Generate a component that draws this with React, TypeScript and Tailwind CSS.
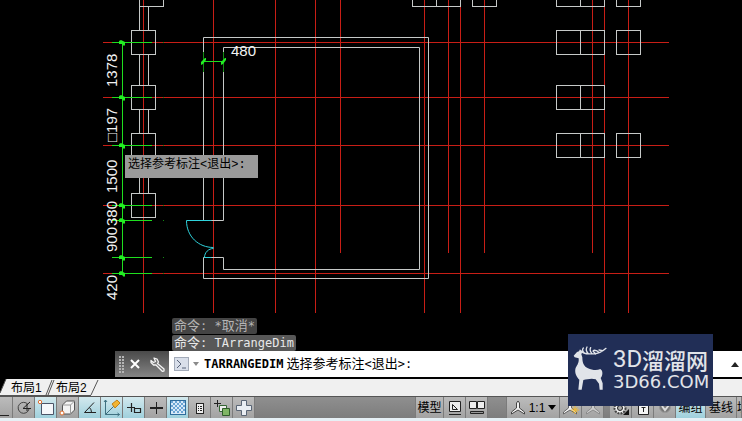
import React from 'react';

const MONO = "font-['DejaVu_Sans_Mono','Noto_Sans_CJK_SC',monospace]";

type Line = [number, number, number, number];

// Axis grid of the plan: x / y positions and where each one ends
const AXIS_X = [
    [143, 313], [213, 313], [275, 313], [315, 313], [340, 253], [424, 313],
    [448, 253], [460, 313], [484, 253], [592, 253], [604, 313], [628, 313],
];
const AXIS_Y = [42, 97, 145, 205, 273];
const DIM_Y = [42, 97, 145, 205, 220, 257, 273];

// Columns, all 24 x 24
const COLUMNS = [
    [139, -18], [412, -18], [436, -18], [472, -18], [556, -18], [580, -18], [616, -18],
    [131, 30], [131, 85], [131, 133], [131, 193],
    [556, 30], [580, 30], [616, 30],
    [556, 85], [580, 85],
    [556, 133], [580, 133], [616, 133],
];

const WALLS: Line[] = [
    [139, 6, 139, 30], [148, 6, 148, 30],
    [139, 54, 139, 85], [148, 54, 148, 85],
    [139, 109, 139, 133], [148, 109, 148, 133],
    [139, 157, 139, 193], [148, 157, 148, 193],
];

const DIM_TEXT = [
    { x: 117, y: 87, text: '1378' },
    { x: 117, y: 142, text: '□197' },
    { x: 117, y: 193, text: '1500' },
    { x: 117, y: 226, text: '380' },
    { x: 117, y: 252, text: '900' },
    { x: 117, y: 300, text: '420' },
];

const FloorPlan = () => (
    <svg width="742" height="320" className="block" role="img" aria-label="Floor plan">
        <g fill="#c81e16">
            {AXIS_X.map(([x, end]) => (
                <rect key={x} x={x} y="0" width="1" height={end} />
            ))}
            {AXIS_Y.map((y) => (
                <rect key={y} x="103" y={y} width="566" height="1" />
            ))}
        </g>
        <g transform="translate(0.5 0.5)" fill="none">
            <g stroke="#c6c9c8">
                {COLUMNS.map(([x, y]) => (
                    <rect key={`${x}-${y}`} x={x} y={y} width="24" height="24" />
                ))}
                {WALLS.map(([x1, y1, x2, y2]) => (
                    <path key={`${x1}-${y1}`} d={`M${x1} ${y1}L${x2} ${y2}`} />
                ))}
                <path d="M203 220V37H428V278H203V257H223V269H419V47H223V220H203" />
            </g>
            {/* Door */}
            <g stroke="#2fd3dc">
                <path d="M186 220H211M204 257H211" />
                <path d="M186 220C186 236 198 247 213 247" />
                <path d="M204 257C204 252 208 248 213 248" />
            </g>
        </g>
        {/* Dimension lines */}
        <g fill="#1fdf1f">
            <rect x="122" y="42" width="1" height="232" />
            {DIM_Y.map((y) => (
                <rect key={y} x="112" y={y} width="40" height="1" />
            ))}
            <rect x="203" y="61" width="21" height="1" />
        </g>
        <g fill="#128a12">
            <rect x="203" y="52" width="1" height="20" />
            <rect x="223" y="52" width="1" height="20" />
            {DIM_Y.map((y) => (
                <rect key={y} x="163" y={y} width="1" height="1" />
            ))}
        </g>
        <g fill="#22ee22">
            {DIM_Y.map((y) => (
                <path key={y} d={`M119 ${y - 1}l2 -1l4 2v3l-1 1l-2 -2h-3z`} />
            ))}
            <path d="M201 62l4 -4h1v2l-3 4l-2 1zM221 62l4 -4h1v2l-3 4l-2 1z" />
        </g>
        <g fill="#f2f2f2" className="font-['Liberation_Sans','DejaVu_Sans',sans-serif] text-[15px]">
            <text x="231" y="56">480</text>
            {DIM_TEXT.map(({ x, y, text }) => (
                <text key={text} transform={`translate(${x} ${y}) rotate(-90)`}>{text}</text>
            ))}
        </g>
    </svg>
);

const Deer = () => (
    <svg viewBox="0 0 225 180" width="75" height="60" className="absolute top-0 left-0" aria-hidden="true">
        <path
            fill="#e1e4e9"
            d="M17 65L27 54L33 52L36 46L43 54L40 61L43 70C43 88 48 98 60 103C72 108 86 111 97 105L102 110C105 119 102 127 98 132L104 148V167H95L93 149L83 136C70 132 58 136 46 138L41 167H31L34 137C26 130 20 118 22 106C24 96 34 90 32 73L20 70Z"
        />
        <path
            fill="none"
            stroke="#e1e4e9"
            strokeWidth="4"
            strokeLinecap="round"
            d="M39 51C46 61 60 60 72 59C90 62 104 52 114 43M50 58C43 52 42 46 46 42M61 59C54 52 54 44 57 39M72 59C66 52 65 46 68 41M94 56C88 50 82 48 77 49M83 60L75 51M104 50L93 48"
        />
    </svg>
);

const Logo = () => (
    <div className="absolute right-[29px] bottom-[15px] h-[72px] w-[145px] bg-[#212e56] text-[#e1e4e9]">
        <Deer />
        <div className="flex flex-col pt-[12px] pl-[45px] whitespace-nowrap">
            <div className="flex h-[26px] items-center leading-[26px]">
                <span className="w-[29px] font-['Roboto',sans-serif] text-[24px]">3D</span>
                <span className="font-['Noto_Sans_CJK_SC',sans-serif] text-[22px] font-medium">溜溜网</span>
            </div>
            <span className="font-['DejaVu_Sans',sans-serif] text-[18px] leading-[20px]">3D66.COM</span>
        </div>
    </div>
);

const CommandLine = () => (
    <div className="absolute right-0 bottom-[2px] left-[115px] flex h-[26px] bg-white">
        <div className="flex w-[54px] shrink-0 items-center bg-linear-to-b from-[#4a4a4a] to-[#858585] pl-1">
            <svg width="5" height="17" fill="#b5b5b5" aria-hidden="true">
                {[0, 3, 6, 9, 12, 15].map((y) => (
                    <path key={y} d={`M0 ${y}h2v2h-2zM3 ${y}h2v2h-2z`} />
                ))}
            </svg>
            <button aria-label="Close" className="ml-[6px] p-0">
                <svg width="10" height="10" stroke="#fff" strokeWidth="2">
                    <path d="M1 1l8 8M9 1l-8 8" />
                </svg>
            </button>
            <button aria-label="Customize" className="ml-[10px]">
                <svg width="15" height="15" viewBox="0 0 15 15">
                    <path
                        d="M4 1L7 2L8.500 5L7.500 6.500L14 12V14L12.500 14.500L6 8L3.500 8L1 5.500L1 3.500L3.500 5.500L5.500 4.500Z"
                        fill="#777"
                        stroke="#f4f4f4"
                        strokeWidth="1.3"
                        strokeLinejoin="round"
                    />
                </svg>
            </button>
        </div>
        <button aria-label="Recent commands" className="ml-[5px] flex shrink-0 items-center gap-1">
            <svg width="15" height="14">
                <rect x=".5" y=".5" width="14" height="13" fill="#d9dfea" stroke="#a3abb9" />
                <path d="M3 3l4 4l-4 4M8 11h4" fill="none" stroke="#59647a" />
            </svg>
            <svg width="6" height="4">
                <path d="M0 0h6l-3 4z" fill="#8a8a8a" />
            </svg>
        </button>
        <label htmlFor="command" className={`${MONO} ml-[5px] flex shrink-0 items-center gap-[3px] text-[12px] text-black`}>
            <span className="font-bold">TARRANGEDIM</span>
            <span>
                <span className="text-[13px]">选择参考标注</span>&lt;<span className="text-[13px]">退出</span>&gt;:
            </span>
        </label>
        <input id="command" className="min-w-0 flex-1 px-1 text-[12px] outline-none" />
        <button aria-label="Show history" className="pr-[3px]">
            <svg width="8" height="5">
                <path d="M0 5h8l-4 -5z" fill="#222" />
            </svg>
        </button>
    </div>
);

interface ToolProps {
    label: string;
    active?: boolean;
    className?: string;
    children: React.ReactNode;
}

const Tool = ({ label, active, className = 'w-[22px]', children }: ToolProps) => (
    <button
        aria-label={label}
        className={`flex h-full shrink-0 items-center justify-center border-r border-[#7b7b7b] ${className} ${
            active ? 'bg-linear-to-b from-[#d3e9ee] to-[#9fd0dc]' : 'bg-linear-to-b from-[#bcbcbc] to-[#a2a2a2]'
        }`}
    >
        {children}
    </button>
);

const Icon = ({ children, width = 20 }: { children: React.ReactNode; width?: number }) => (
    <svg width={width} height="20" viewBox={`0 0 ${width} 20`} fill="none" stroke="#222" aria-hidden="true">
        {children}
    </svg>
);

const StatusBar = () => (
    <div className="flex h-[22px] shrink-0 overflow-hidden border-t border-[#555] bg-linear-to-b from-[#8f8f8f] to-[#7d7d7d] font-['Liberation_Sans','Noto_Sans_CJK_SC',sans-serif] text-[12px] text-black">
        <Tool label="Grid" className="w-[13px]">
            <Icon width={12}><path d="M0 17.500h9" /></Icon>
        </Tool>
        <Tool label="Polar tracking">
            <Icon>
                <path d="M14 6.500A5.500 5.500 0 1 0 15 11" stroke="#444" />
                <path d="M17 10.500H9L16 4M13 6v7" />
            </Icon>
        </Tool>
        <Tool label="Object snap" active>
            <Icon>
                <path d="M5.500 5.500h12v11h-12z" fill="#f6f8fb" stroke="#4b5568" />
                <circle cx="4" cy="4" r="1.700" fill="#fff" stroke="#e07030" />
            </Icon>
        </Tool>
        <Tool label="3D object snap">
            <Icon>
                <path d="M4.500 7l4 -4h8v9l-4 4h-8z" fill="#f3f3f3" stroke="#555" />
                <path d="M4.500 7h8v9M12.500 7l4 -4" stroke="#999" />
                <circle cx="4" cy="15" r="2" fill="#fff" stroke="#e07030" />
            </Icon>
        </Tool>
        <Tool label="Object snap tracking" active>
            <Icon><path d="M14 4.500L4.500 14.500H16M9.500 9.500q2 2 2 5" /></Icon>
        </Tool>
        <Tool label="Dynamic UCS" active>
            <Icon>
                <path d="M3.500 2v14.500h14M3.500 16.500L13 7M2 4l1.500 -2l1.500 2M15.500 15l2 1.500l-2 1.500" stroke="#3f7080" />
                <path d="M10 6l5 -4l3 3l-5 5z" fill="#f2b432" stroke="#c08018" />
            </Icon>
        </Tool>
        <Tool label="Dynamic input" active>
            <Icon><path d="M3 9.500h8M7.500 5v9M10.500 10.500h6v4h-6z" strokeWidth="1.200" /></Icon>
        </Tool>
        <Tool label="Lineweight">
            <Icon>
                <path d="M4 10h13" strokeWidth="2" />
                <path d="M10.500 4v12" />
            </Icon>
        </Tool>
        <Tool label="Transparency" active>
            <Icon>
                <rect x="2.500" y="2.500" width="15" height="14" fill="#d8e9f8" stroke="#2e6c9c" />
                <path d="M3 4h14M3 8h14M3 12h14" stroke="#6aa5d4" strokeWidth="2" strokeDasharray="2 2" />
                <path d="M5 6h12M5 10h12M5 14h12" stroke="#6aa5d4" strokeWidth="2" strokeDasharray="2 2" />
            </Icon>
        </Tool>
        <Tool label="Quick properties">
            <Icon>
                <rect x="6.500" y="5.500" width="7" height="10" fill="#eee" />
                <path d="M8 8.500h1M10 8.500h2M8 10.500h1M10 10.500h2M8 12.500h1M10 12.500h2" />
            </Icon>
        </Tool>
        <Tool label="Selection cycling">
            <Icon>
                <path d="M2 5.500h7M5.500 2v7" />
                <path d="M7.500 7.500h7v6h-7z" fill="#eee" stroke="#356635" />
                <path d="M10.500 10.500h7v7h-7z" fill="#7fb565" stroke="#2f5c2b" />
            </Icon>
        </Tool>
        <Tool label="Annotation monitor">
            <Icon>
                <path d="M7.500 2.500h5v5h5v5h-5v5h-5v-5h-5v-5h5z" fill="#e9eef3" stroke="#596575" />
            </Icon>
        </Tool>

        <div className="flex-1" />

        <Tool label="Model" className="w-[29px] border-l"><span>模型</span></Tool>
        <Tool label="Layout view">
            <Icon>
                <path d="M4.500 3.500h11v10h-11z" fill="#eee" />
                <path d="M7.500 6.500v5h5zM4 16.500h12" />
            </Icon>
        </Tool>
        <Tool label="Quick view">
            <Icon>
                <path d="M2.500 3.500h7v7h-7zM10.500 3.500h7v7h-7z" fill="#eee" />
                <path d="M3.500 13.500h13v2h-13z" fill="#999" />
            </Icon>
        </Tool>
        <div className="w-[18px] shrink-0" />
        <Tool label="Annotation scale" className="w-[54px] gap-[3px] border-l">
            <Icon width={16}>
                <path d="M8 3l1.500 2v5l5 4v2l-6.500 -4l-6.500 4v-2l5 -4v-5z" fill="#f2f2f2" stroke="#444" />
            </Icon>
            <span>1:1</span>
            <svg width="8" height="5"><path d="M0 0h8l-4 5z" /></svg>
        </Tool>
        <Tool label="Annotation visibility">
            <Icon>
                <path d="M9 3l1.500 2v5l5 4v2l-6.500 -4l-6.500 4v-2l5 -4v-5z" fill="#f2f2f2" stroke="#666" />
                <path d="M14 8v8M10 12h8M11.500 9.500l5 5M16.500 9.500l-5 5" stroke="#f0b830" />
            </Icon>
        </Tool>
        <Tool label="Auto scale">
            <Icon>
                <path d="M10 5l1.500 2v3l5 4v2l-6.500 -4l-6.500 4v-2l5 -4v-3z" fill="#ccc" stroke="#8a8a8a" />
            </Icon>
        </Tool>
        <div className="w-[6px] shrink-0" />
        <Tool label="Workspace">
            <Icon>
                <circle cx="9" cy="10" r="5.500" fill="#eee" stroke="#444" strokeWidth="2" strokeDasharray="2 1" />
                <circle cx="9" cy="10" r="2.500" fill="#aaa" />
                <path d="M18 11v6h-6z" fill="#111" stroke="none" />
            </Icon>
        </Tool>
        <Tool label="Lock">
            <Icon>
                <path d="M5.500 6.500h10v10h-10z" fill="#f5f5f5" />
                <path d="M10.500 9v5M8.500 9.500h4" />
            </Icon>
        </Tool>
        <Tool label="Hardware acceleration">
            <Icon>
                <circle cx="10" cy="9" r="5.500" fill="#777" stroke="#999" />
                <path d="M7 8l3 4l4 -5" stroke="#ddd" strokeWidth="2" />
            </Icon>
        </Tool>
        <Tool label="Group" active className="w-[30px]"><span>编组</span></Tool>
        <Tool label="Baseline" className="w-[31px]"><span>基线</span></Tool>
        <Tool label="Fill" className="w-[5px] justify-start overflow-hidden"><span className="shrink-0">填充</span></Tool>
    </div>
);

const App = () => (
    <div className="relative flex h-screen flex-col overflow-hidden bg-black">
        <main className="relative min-h-0 flex-1 overflow-hidden bg-black">
            <FloorPlan />
            <div className="absolute top-[155px] left-[125px] h-[23px] w-[133px] bg-[#9a9a9a] pl-[3px] font-['Liberation_Mono','Noto_Sans_CJK_SC',monospace] text-[12px] leading-[20px] whitespace-nowrap text-black">
                选择参考标注&lt;退出&gt;:
            </div>
            <div className={`${MONO} absolute bottom-[28px] left-[172px] flex flex-col items-start gap-px text-[12px] leading-[15px] whitespace-nowrap`}>
                <p className="rounded-xs bg-[#444] px-[2px] text-[#b5b5b5]"><span className="text-[13px] leading-[15px]">命令</span>: *<span className="text-[13px] leading-[15px]">取消</span>*</p>
                <p className="rounded-xs bg-[#585858] px-[2px] text-[#e8e8e8]"><span className="text-[13px] leading-[15px]">命令</span>: TArrangeDim</p>
            </div>
            <CommandLine />
        </main>
        <nav className="relative flex h-[17px] shrink-0 items-center bg-[#f0f0f0] pl-[11px] font-['Liberation_Sans','Noto_Sans_CJK_SC',sans-serif] text-[12px] leading-[16px] text-black">
            <svg width="100" height="17" className="absolute top-0 left-0" fill="none" stroke="#555" aria-hidden="true">
                <path d="M0 0H6L0 14z" fill="#000" stroke="none" />
                <path d="M6 0L0 14M52 1L46 16M54 1L48 16M98 1L91 16M0 16.500H91" />
            </svg>
            <button className="relative w-[45px] text-left">布局1</button>
            <button className="relative text-left">布局2</button>
        </nav>
        <StatusBar />
        <div className="h-[3px] shrink-0 bg-[#e6f0f5]" />
        <Logo />
    </div>
);

export default App;
